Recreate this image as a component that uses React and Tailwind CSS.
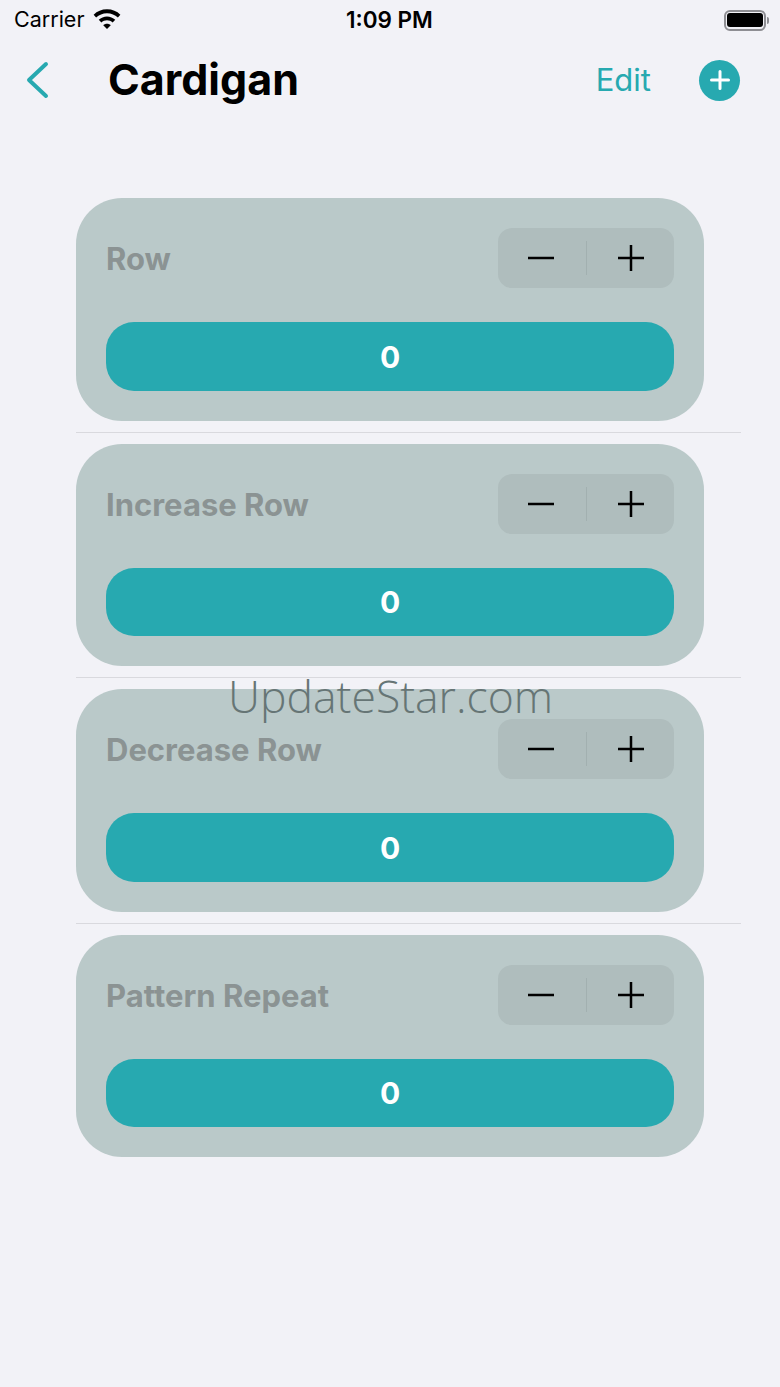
const counters = ["Row", "Increase Row", "Decrease Row", "Pattern Repeat"];

function StatusBar() {
  return (
    <div className="relative flex h-[40px] items-center justify-between pl-[14px] pr-[11px]">
      <div className="flex items-center gap-[9px]">
        <span className="text-[21.5px] leading-none text-black">Carrier</span>
        <svg width="28" height="20" viewBox="3 3 22 16" className="mb-[3px]">
          <path d="M14 3.200c4.200 0 7.900 1.600 10.700 4.300l-2 2.200C20.400 7.600 17.400 6.300 14 6.300S7.600 7.600 5.300 9.700l-2-2.200C6.100 4.800 9.800 3.200 14 3.200z" fill="#000" />
          <path d="M14 9c2.500 0 4.800 1 6.600 2.600l-2.100 2.200C17.300 12.700 15.700 12 14 12s-3.300.7-4.500 1.800l-2.100-2.200C9.200 10 11.500 9 14 9z" fill="#000" />
          <path d="M14 14.700c1.200 0 2.200.4 3 1.200L14 19l-3-3.100c.8-.8 1.800-1.200 3-1.200z" fill="#000" />
        </svg>
      </div>
      <span className="absolute left-[346px] top-[8px] text-[22.500px] font-semibold leading-[24px] text-black">1:09 PM</span>
      <div className="flex items-center">
        <div className="flex h-[21px] w-[42px] items-center justify-center rounded-[6px] border-2 border-[#8e8e93]">
          <div className="h-[14px] w-[36px] rounded-[3px] bg-black" />
        </div>
        <div className="ml-[1px] h-[7px] w-[2px] rounded-r-sm bg-[#8e8e93]" />
      </div>
    </div>
  );
}

function Header() {
  return (
    <div className="flex h-[80px] items-center pl-[25px] pr-[40px]">
      <svg width="24" height="38" viewBox="0 0 24 38" className="shrink-0">
        <path d="M21 3 L4 19 L21 35" fill="none" stroke="#27a9b0" strokeWidth="4" strokeLinecap="round" strokeLinejoin="round" />
      </svg>
      <h1 className="ml-[59px] flex-1 pb-[2px] text-[43px] font-bold leading-none text-black">Cardigan</h1>
      <span className="pb-[2px] text-[31px] leading-none text-[#27a9b0]">Edit</span>
      <div className="ml-[48px] flex size-[41px] items-center justify-center rounded-full bg-[#27a9b0]">
        <svg width="20" height="20" viewBox="0 0 20 20">
          <path d="M10 1.500V18.500M1.500 10H18.500" stroke="#fff" strokeWidth="3" strokeLinecap="round" />
        </svg>
      </div>
    </div>
  );
}

function Stepper() {
  return (
    <div className="flex h-[60px] w-[176px] items-center rounded-[14px] bg-[#afbdbd]">
      <div className="flex flex-1 items-center justify-center pr-[2px]">
        <svg width="26" height="26" viewBox="0 0 26 26">
          <path d="M0 13H26" stroke="#000" strokeWidth="2.500" />
        </svg>
      </div>
      <div className="h-[34px] w-px bg-[#a2b0b0]" />
      <div className="flex flex-1 items-center justify-center pl-[2px]">
        <svg width="26" height="26" viewBox="0 0 26 26">
          <path d="M0 13H26M13 0V26" stroke="#000" strokeWidth="2.500" />
        </svg>
      </div>
    </div>
  );
}

function CounterCard({ name }) {
  return (
    <div className="flex w-[628px] flex-col gap-[34px] rounded-[46px] bg-[#bac9c9] p-[30px]">
      <div className="flex items-center justify-between">
        <span className="pt-[1px] text-[31px] font-bold leading-none text-[#8b9393]">{name}</span>
        <Stepper />
      </div>
      <div className="flex h-[68.500px] items-center justify-center rounded-[28px] bg-[#27a9b0] pt-[2px] text-[30px] font-bold text-white">
        0
      </div>
    </div>
  );
}

export default function App() {
  return (
    <div className="relative h-[1387px] w-[780px] overflow-hidden bg-[#f2f2f7] font-['Inter',sans-serif]">
      <StatusBar />
      <Header />
      <div className="mt-[78px] flex flex-col pl-[76px]">
        {counters.map((name, i) => (
          <div key={name}>
            <CounterCard name={name} />
            {i < counters.length - 1 && <div className="my-[11px] h-px w-[665px] bg-[#d9d9de]" />}
          </div>
        ))}
      </div>
      {/* watermark over the page */}
      <span className="absolute left-[228px] top-[666px] font-['Open_Sans',sans-serif] text-[44.500px] font-light leading-[60px] text-[#667575]">
        UpdateStar.com
      </span>
    </div>
  );
}
